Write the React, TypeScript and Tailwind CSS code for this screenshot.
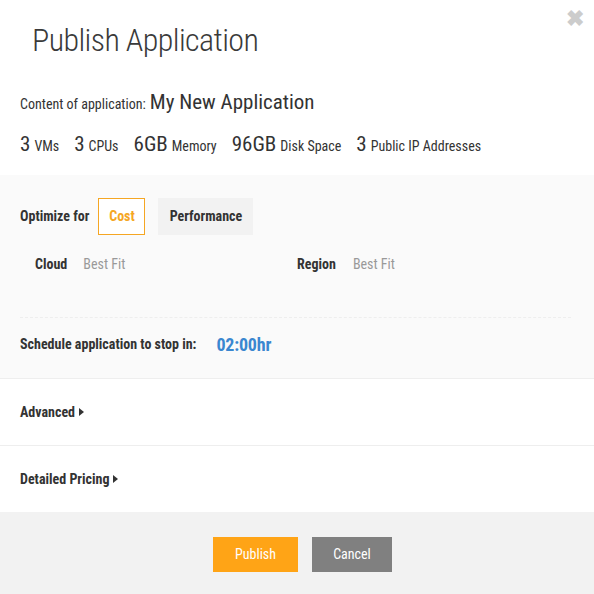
import { useState } from "react";

const FONT = "font-['Roboto_Condensed','Roboto','Liberation_Sans',sans-serif] [font-stretch:condensed]";

function Caret() {
  return (
    <svg className="ml-1 inline-block h-[8px] w-[5px]" viewBox="0 0 5 8" fill="#333">
      <path d="M0 0 L5 4 L0 8 Z" />
    </svg>
  );
}

export default function App() {
  const [mode, setMode] = useState<"cost" | "performance">("cost");

  const stats = [
    { n: "3", label: "VMs" },
    { n: "3", label: "CPUs" },
    { n: "6GB", label: "Memory" },
    { n: "96GB", label: "Disk Space" },
    { n: "3", label: "Public IP Addresses" },
  ];

  return (
    <div className={`${FONT} relative h-[594px] w-[594px] bg-white text-[#333]`}>
      <button
        type="button"
        aria-label="Close"
        className="absolute right-[10px] top-[8px] text-[22px] font-bold leading-none text-[#ccc]"
      >
        ✖
      </button>

      <div className="px-[20px] pt-[19px]">
        <h1 className="pl-[12px] text-[32px] font-light leading-[42px] tracking-[-0.6px] text-[#3a3a3a]">
          Publish Application
        </h1>
        <div className="mt-[26px] flex items-baseline gap-[4px]">
          <span className="text-[14px]">Content of application:</span>
          <span className="text-[21px]">My New Application</span>
        </div>
        <div className="mt-[10px] flex items-baseline gap-[15px]">
          {stats.map((s) => (
            <span key={s.label} className="flex items-baseline gap-[4px]">
              <span className="text-[21px]">{s.n}</span>
              <span className="text-[14px]">{s.label}</span>
            </span>
          ))}
        </div>
      </div>

      <div className="mt-[15px] border-b border-[#eee] bg-[#fafafa] px-[20px] pt-[23px]">
        <div className="flex items-center">
          <span className="text-[14px] font-bold">Optimize for</span>
          <button
            type="button"
            onClick={() => setMode("cost")}
            className={`ml-[9px] h-[37px] w-[47px] text-[14px] font-bold ${
              mode === "cost"
                ? "border border-[#f5a623] bg-white text-[#f5a623]"
                : "bg-[#f2f2f2] text-[#333]"
            }`}
          >
            Cost
          </button>
          <button
            type="button"
            onClick={() => setMode("performance")}
            className={`ml-[13px] h-[37px] w-[95px] text-[14px] font-bold ${
              mode === "performance"
                ? "border border-[#f5a623] bg-white text-[#f5a623]"
                : "bg-[#f2f2f2] text-[#333]"
            }`}
          >
            Performance
          </button>
        </div>
        <div className="mt-[19px] flex items-center text-[14px]">
          <div className="flex w-[277px] items-center pl-[15px]">
            <span className="font-bold">Cloud</span>
            <span className="ml-[16px] text-[#999]">Best Fit</span>
          </div>
          <div className="flex items-center">
            <span className="font-bold">Region</span>
            <span className="ml-[17px] text-[#999]">Best Fit</span>
          </div>
        </div>
        <div className="mt-[42px] mr-[3px] border-t border-dashed border-[#eee]" />
        <div className="flex h-[60px] items-center pb-[8px]">
          <span className="text-[14px] font-bold">Schedule application to stop in:</span>
          <span className="ml-[20px] text-[18px] font-bold tracking-[-0.2px] text-[#3a87d0]">02:00hr</span>
        </div>
      </div>

      <div className="flex h-[67px] items-center border-b border-[#eee] px-[20px]">
        <span className="flex items-center text-[14px] font-bold">
          Advanced
          <Caret />
        </span>
      </div>
      <div className="flex h-[66px] items-center px-[20px]">
        <span className="flex items-center text-[14px] font-bold">
          Detailed Pricing
          <Caret />
        </span>
      </div>

      <div className="flex h-[82px] items-center justify-center gap-[14px] bg-[#f2f2f2] pl-[11px] pt-[3px]">
        <button type="button" className="h-[35px] w-[85px] bg-[#ffa416] text-[14px] text-white">
          Publish
        </button>
        <button type="button" className="h-[35px] w-[80px] bg-[#808080] text-[14px] text-white">
          Cancel
        </button>
      </div>
    </div>
  );
}
